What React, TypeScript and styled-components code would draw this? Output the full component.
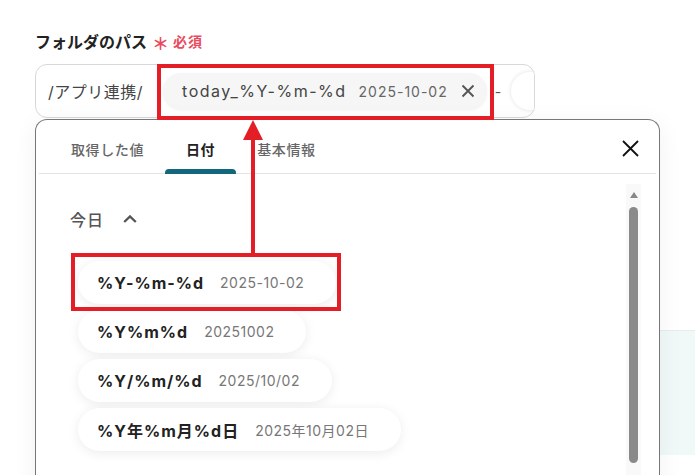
import React from "react";
import styled, { createGlobalStyle } from "styled-components";

const GlobalStyle = createGlobalStyle`
  html, body { margin: 0; padding: 0; background: #fff; }
  body {
    font-family: "Inter", "Noto Sans CJK JP", sans-serif;
    -webkit-font-smoothing: antialiased;
  }
  * { box-sizing: border-box; }
`;

const Page = styled.div`
  position: relative;
  width: 695px;
  height: 475px;
  overflow: hidden;
  padding: 29px 0 0 35px;
  background: #fff;
`;

const Field = styled.div`
  position: relative;
  width: 500px;
`;

const Label = styled.div`
  display: flex;
  align-items: center;
  gap: 5px;
  height: 24px;
  font-family: "Noto Sans CJK JP", sans-serif;
  font-size: 16px;
  font-weight: 700;
  color: #222;
`;

const Required = styled.span`
  display: flex;
  align-items: center;
  gap: 3px;
  color: #e94a5e;
  font-size: 14px;
  font-weight: 700;
  letter-spacing: 1px;
`;

const Asterisk = styled.span`
  font-size: 17px;
  font-weight: 700;
  line-height: 1;
  margin-top: 3px;
`;

const PathInput = styled.div`
  margin-top: 11px;
  height: 54px;
  border: 1px solid #d6d8db;
  border-radius: 12px;
  display: flex;
  align-items: center;
  padding-left: 12px;
  overflow: hidden;
  background: #fff;
`;

const Prefix = styled.span`
  font-size: 16px;
  color: #444;
  letter-spacing: 0.5px;
  flex-shrink: 0;
`;

const Chip = styled.div`
  flex-shrink: 0;
  margin-left: 20px;
  height: 36px;
  border-radius: 18px;
  background: #f6f6f6;
  box-shadow: 0 1px 3px rgba(0, 0, 0, 0.06);
  display: flex;
  align-items: center;
  gap: 12px;
  padding: 0 12px 0 19px;
`;

const ChipText = styled.span`
  font-size: 16px;
  color: #444;
  letter-spacing: 1.5px;
`;

const ChipDate = styled.span`
  font-size: 14px;
  color: #666;
  letter-spacing: 1px;
`;

const ChipClose = styled.svg`
  width: 14px;
  height: 14px;
  margin-left: 1px;
  stroke: #555;
  stroke-width: 1.9;
  fill: none;
`;

const Sep = styled.span`
  flex-shrink: 0;
  margin: 0 10px 0 8px;
  font-size: 14px;
  color: #555;
`;

const GhostChip = styled.div`
  flex-shrink: 0;
  width: 60px;
  height: 38px;
  border-radius: 19px;
  background: #fff;
  box-shadow: 0 0 4px rgba(0, 0, 0, 0.12);
`;

const Dropdown = styled.div`
  position: absolute;
  top: calc(100% + 1px);
  left: 0;
  width: 625px;
  height: 400px;
  border: 1px solid #777;
  border-bottom: none;
  border-radius: 12px 12px 0 0;
  background: #fff;
  display: flex;
  flex-direction: column;
  box-shadow: 0 4px 24px rgba(0, 0, 0, 0.06);
  z-index: 2;
`;

const TabHeader = styled.div`
  display: flex;
  align-items: stretch;
  height: 54px;
  margin: 0 3px;
  padding: 4px 17px 0 11px;
  border-bottom: 1px solid #e4e4e4;
`;

const Tab = styled.div<{ $active?: boolean }>`
  position: relative;
  display: flex;
  align-items: center;
  padding: 0 21px;
  font-size: 14px;
  letter-spacing: 0.6px;
  font-weight: ${(p) => (p.$active ? 700 : 500)};
  color: ${(p) => (p.$active ? "#222" : "#666")};

  &::after {
    content: "";
    display: ${(p) => (p.$active ? "block" : "none")};
    position: absolute;
    left: 0;
    right: 0;
    bottom: -1px;
    height: 5px;
    border-radius: 4px 4px 0 0;
    background: #12677d;
  }
`;

const CloseButton = styled.svg`
  margin-left: auto;
  align-self: center;
  width: 17px;
  height: 17px;
  stroke: #111;
  stroke-width: 1.8;
  fill: none;
`;

const Body = styled.div`
  flex: 1;
  display: flex;
  min-height: 0;
`;

const Content = styled.div`
  flex: 1;
  padding: 30px 0 0 34px;
`;

const SectionHeader = styled.div`
  display: flex;
  align-items: center;
  gap: 19px;
  height: 30px;
  font-size: 16px;
  font-weight: 500;
  color: #555;
  letter-spacing: 1px;
`;

const Chevron = styled.svg`
  width: 14px;
  height: 8px;
  stroke: #555;
  stroke-width: 2.4;
  fill: none;
`;

const ItemList = styled.div`
  margin-top: 27px;
  padding-left: 8px;
  display: flex;
  flex-direction: column;
  align-items: flex-start;
  gap: 6px;
`;

const Item = styled.div`
  height: 43px;
  border-radius: 22px;
  background: #fff;
  box-shadow: 0 2px 12px rgba(0, 0, 0, 0.08);
  padding: 0 32px 0 19px;
  display: flex;
  align-items: center;
  gap: 16px;
`;

const ItemCode = styled.span`
  font-size: 16px;
  font-weight: 700;
  color: #222;
  letter-spacing: 1px;
`;

const ItemDate = styled.span`
  font-size: 14px;
  color: #777;
  letter-spacing: 0.5px;
`;

const ScrollTrack = styled.div`
  width: 15px;
  margin: 10px 18px 0 0;
  background: #f9f9f9;
  display: flex;
  flex-direction: column;
  align-items: center;
  padding-top: 8px;
`;

const ScrollArrow = styled.div`
  width: 0;
  height: 0;
  border-left: 4.5px solid transparent;
  border-right: 4.5px solid transparent;
  border-bottom: 6px solid #888;
`;

const ScrollThumb = styled.div`
  margin-top: 9px;
  width: 9px;
  height: 256px;
  border-radius: 5px;
  background: #8a8a8a;
`;

const Backdrop = styled.div`
  display: flex;
  margin-top: 212px;
`;

const BackdropMain = styled.div`
  flex: 0 0 625px;
`;

const MintCard = styled.div`
  flex: 0 0 60px;
  height: 125px;
  background: #f0f9f8;
  border-top: 1px solid #e4eeee;
`;

const Highlight = styled.div<{ $x: number; $y: number; $w: number; $h: number }>`
  position: absolute;
  left: ${(p) => p.$x}px;
  top: ${(p) => p.$y}px;
  width: ${(p) => p.$w}px;
  height: ${(p) => p.$h}px;
  border: 4px solid #e41e26;
  z-index: 5;
  pointer-events: none;
`;

const Arrow = styled.svg`
  position: absolute;
  left: 243px;
  top: 120px;
  width: 20px;
  height: 134px;
  fill: #e41e26;
  z-index: 5;
`;

const items = [
  { code: "%Y-%m-%d", date: "2025-10-02" },
  { code: "%Y%m%d", date: "20251002" },
  { code: "%Y/%m/%d", date: "2025/10/02" },
  { code: "%Y年%m月%d日", date: "2025年10月02日" },
];

export default function App() {
  return (
    <>
      <GlobalStyle />
      <Page>
        <Field>
          <Label>
            フォルダのパス
            <Required>
              <Asterisk>＊</Asterisk>必須
            </Required>
          </Label>
          <PathInput>
            <Prefix>/アプリ連携/</Prefix>
            <Chip>
              <ChipText>today_%Y-%m-%d</ChipText>
              <ChipDate>2025-10-02</ChipDate>
              <ChipClose viewBox="0 0 14 14">
                <path d="M1.5 1.5 12.5 12.5M12.5 1.5 1.5 12.5" />
              </ChipClose>
            </Chip>
            <Sep>-</Sep>
            <GhostChip />
          </PathInput>
          <Dropdown>
            <TabHeader>
              <Tab>取得した値</Tab>
              <Tab $active>日付</Tab>
              <Tab>基本情報</Tab>
              <CloseButton viewBox="0 0 17 17">
                <path d="M1 1 16 16M16 1 1 16" />
              </CloseButton>
            </TabHeader>
            <Body>
              <Content>
                <SectionHeader>
                  今日
                  <Chevron viewBox="0 0 14 8">
                    <polyline points="1.2,7 7,1.5 12.8,7" />
                  </Chevron>
                </SectionHeader>
                <ItemList>
                  {items.map((it) => (
                    <Item key={it.code}>
                      <ItemCode>{it.code}</ItemCode>
                      <ItemDate>{it.date}</ItemDate>
                    </Item>
                  ))}
                </ItemList>
              </Content>
              <ScrollTrack>
                <ScrollArrow />
                <ScrollThumb />
              </ScrollTrack>
            </Body>
          </Dropdown>
        </Field>
        <Backdrop>
          <BackdropMain />
          <MintCard />
        </Backdrop>
        <Highlight $x={157} $y={64} $w={337} $h={56} />
        <Highlight $x={71} $y={253} $w={270} $h={58} />
        <Arrow viewBox="0 0 20 134">
          <polygon points="10,0 20,20 0,20" />
          <rect x="8" y="18" width="4" height="116" />
        </Arrow>
      </Page>
    </>
  );
}
